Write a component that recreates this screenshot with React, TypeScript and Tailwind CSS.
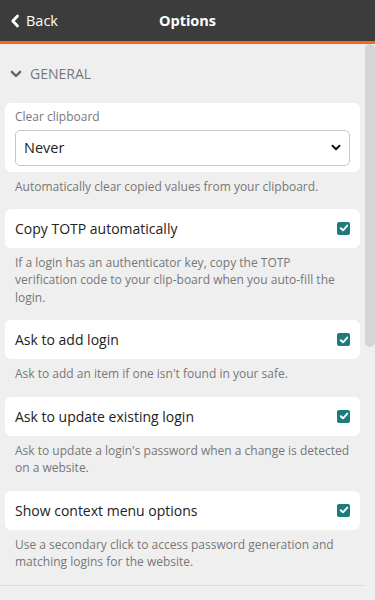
import React from "react";

const Check = () => (
  <div className="w-[13px] h-[13px] rounded-[2px] bg-[#1b7c7a] flex items-center justify-center shrink-0">
    <svg width="10" height="10" viewBox="0 0 10 10">
      <path d="M1.8 5.2 L4 7.3 L8.3 2.6" fill="none" stroke="white" strokeWidth="1.9" strokeLinecap="round" strokeLinejoin="round" />
    </svg>
  </div>
);

const ToggleRow = ({ label, help }: { label: string; help: string }) => (
  <div>
    <div className="bg-white rounded-[6px] h-[39px] px-[10px] flex items-center justify-between">
      <span className="text-[14px] text-[#222]">{label}</span>
      <Check />
    </div>
    <p className="px-[10px] pt-[6px] pb-[14px] text-[12px] leading-[17.5px] text-[#777]">{help}</p>
  </div>
);

export default function App() {
  return (
    <div className="w-[375px] h-[600px] overflow-hidden bg-[#efefef] flex flex-col" style={{ fontFamily: '"Open Sans", sans-serif' }}>
      <header className="h-[44px] bg-[#3c3c3c] border-b-[3px] border-[#f46a1b] flex items-center relative shrink-0">
        <div className="flex items-center pl-[10px] text-white text-[14.5px] gap-[6px]">
          <svg width="10" height="14" viewBox="0 0 10 14">
            <path d="M7.5 2 L2.8 7 L7.5 12" fill="none" stroke="white" strokeWidth="2.8" strokeLinecap="round" strokeLinejoin="round" />
          </svg>
          <span>Back</span>
        </div>
        <div className="absolute left-0 right-0 text-center text-white font-bold text-[14.5px] pointer-events-none">Options</div>
      </header>
      <div className="flex flex-1 min-h-0">
        <div className="flex-1 px-[5px]">
          <div className="flex items-center gap-[8px] pl-[5px] h-[59px] text-[#777] text-[14px]">
            <svg width="12" height="10" viewBox="0 0 12 10">
              <path d="M1.8 2.8 L6 7 L10.2 2.8" fill="none" stroke="#666" strokeWidth="2.4" strokeLinecap="round" strokeLinejoin="round" />
            </svg>
            <span>GENERAL</span>
          </div>
          <div>
            <div className="bg-white rounded-[6px] px-[10px] pt-[5px] pb-[6px]">
              <div className="text-[12px] text-[#777] leading-[18px] pb-[4px]">Clear clipboard</div>
              <div className="relative">
                <select className="appearance-none w-full h-[36px] border border-[#c8c8c8] rounded-[5px] bg-white px-[8px] text-[14.5px] text-[#222] outline-none" style={{ fontFamily: '"Open Sans", sans-serif' }} defaultValue="never">
                  <option value="never">Never</option>
                </select>
                <svg className="absolute right-[9px] top-[14px] pointer-events-none" width="10" height="8" viewBox="0 0 10 8">
                  <path d="M1.5 1.8 L5 5.3 L8.5 1.8" fill="none" stroke="#111" strokeWidth="2" strokeLinecap="round" strokeLinejoin="round" />
                </svg>
              </div>
            </div>
            <p className="px-[10px] pt-[6px] pb-[13px] text-[12px] leading-[17.5px] text-[#777]">Automatically clear copied values from your clipboard.</p>
          </div>
          <ToggleRow label="Copy TOTP automatically" help="If a login has an authenticator key, copy the TOTP verification code to your clip-board when you auto-fill the login." />
          <ToggleRow label="Ask to add login" help="Ask to add an item if one isn't found in your safe." />
          <ToggleRow label="Ask to update existing login" help="Ask to update a login's password when a change is detected on a website." />
          <ToggleRow label="Show context menu options" help="Use a secondary click to access password generation and matching logins for the website." />
          <div className="border-t border-[#dcdcdc] -mx-[5px]" />
        </div>
        <div className="w-[10px] shrink-0 flex flex-col">
          <div className="h-[303px] bg-[#d5d5d5] rounded-[5px]" />
        </div>
      </div>
    </div>
  );
}
